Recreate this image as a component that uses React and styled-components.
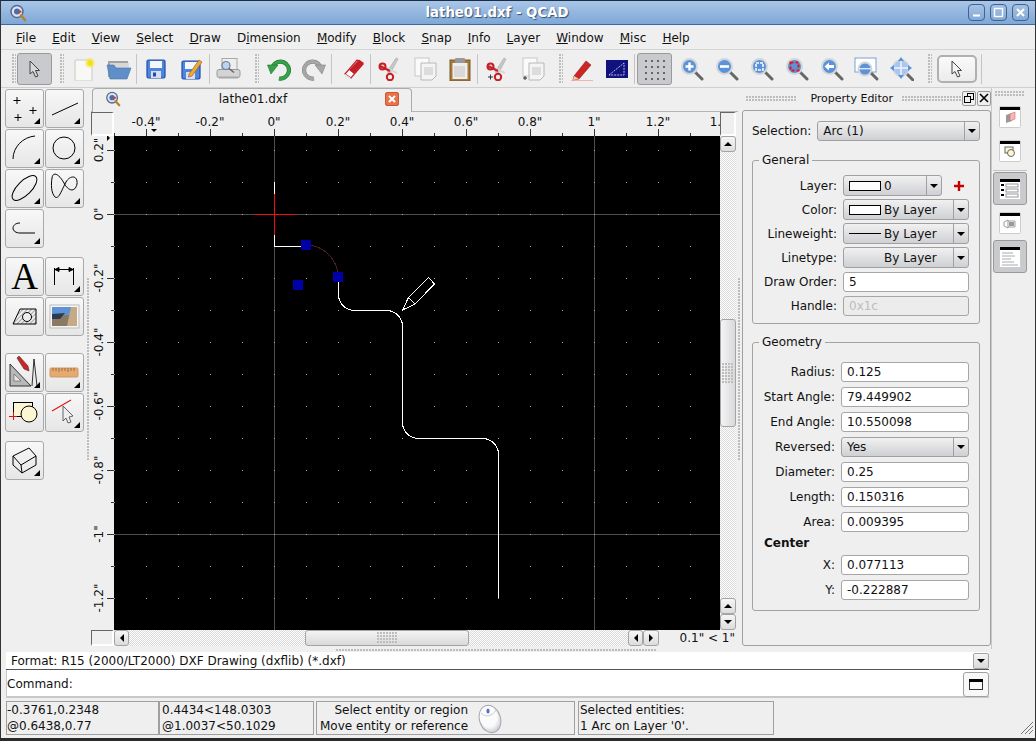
import React from "react";
import styled, { createGlobalStyle, css } from "styled-components";

const GlobalStyle = createGlobalStyle`
    * { box-sizing: border-box; }
    html, body { margin: 0; padding: 0; background: #111; }
    body { font-family: "DejaVu Sans", sans-serif; font-size: 12px; color: #111; }
`;

const dither = css`
    background: repeating-conic-gradient(#fff 0 25%, #d9d9d9 0 50%) 0 0 / 2px 2px;
`;

const dots = css`
    background: radial-gradient(circle at 1px 1px, #bdbdbd 0.8px, transparent 1px) 0 0 / 3px 3px;
`;

const Window = styled.div`
    width: 1036px;
    height: 741px;
    display: flex;
    flex-direction: column;
    background: #efefef;
    border-top: 1px solid #1c2c44;
    border-left: 1px solid #333;
    border-right: 1px solid #333;
    border-bottom: 3px solid #2a2a2a;
    overflow: hidden;
`;

const TitleBar = styled.div`
    height: 24px;
    flex: none;
    position: relative;
    display: flex;
    align-items: center;
    justify-content: center;
    padding-right: 42px;
    background: linear-gradient(#a9c6e8, #7fa7d6);
    border-bottom: 1px solid #3d6a9e;
`;

const TitleText = styled.div`
    font-weight: bold;
    font-size: 13.3px;
    color: #fff;
    text-shadow: 1px 1px 1px #33507a;
`;

const TitleIcon = styled.div`
    position: absolute;
    left: 8px;
    top: 3px;
`;

const WinButtons = styled.div`
    position: absolute;
    right: 6px;
    top: 3px;
    display: flex;
    gap: 5px;
`;

const WinButton = styled.div`
    width: 17px;
    height: 17px;
    border: 1px solid #3f638f;
    border-radius: 4px;
    background: linear-gradient(#a5c2e4, #84a9d6);
    display: flex;
    align-items: center;
    justify-content: center;
`;

const MenuBar = styled.div`
    height: 25px;
    flex: none;
    display: flex;
    align-items: center;
    gap: 16.15px;
    padding: 2px 0 0 15px;
    font-size: 12px;
    border-bottom: 1px solid #d4d4d4;
`;

const Mnemonic = styled.span`
    text-decoration: underline;
`;

const ToolBar = styled.div`
    height: 38px;
    flex: none;
    display: flex;
    align-items: center;
    padding-left: 11px;
    border-bottom: 1px solid #d0d0d0;
`;

const Grip = styled.div`
    width: 4px;
    height: 30px;
    margin: 0 ${(p) => p.$after ?? 2}px 0 ${(p) => p.$before ?? 8}px;
    ${dots}
`;

const Sep = styled.div`
    width: 1px;
    height: 30px;
    background: #c4c4c4;
    margin: 0 ${(p) => p.$right ?? 1}px 0 ${(p) => p.$left ?? 1}px;
`;

const Slot = styled.div`
    width: 35px;
    height: 32px;
    flex: none;
    display: flex;
    align-items: center;
    justify-content: center;
    border-radius: 3px;
    margin-right: ${(p) => p.$gap || 0}px;
    ${(p) => p.$active && css`
        background: #c9cacd;
        border: 1px solid #9a9a9a;
    `}
`;

const WideSlot = styled(Slot)`
    width: 40px;
    height: 28px;
    margin-left: 5px;
    background: linear-gradient(#fafafa, #ececec);
    border: 2px solid #b0b0b0;
    border-radius: 5px;
`;

const Main = styled.div`
    flex: 1;
    display: flex;
    min-height: 0;
`;

const LeftTools = styled.div`
    width: 86px;
    flex: none;
    padding: 1px 0 0 4px;
    display: flex;
    flex-direction: column;
`;

const ToolGroup = styled.div`
    display: grid;
    grid-template-columns: 39px 39px;
    grid-auto-rows: 39px;
    gap: 1px;
    margin-bottom: ${(p) => p.$space}px;
`;

const ToolButton = styled.div`
    position: relative;
    border: 1px solid #a9a9a9;
    border-radius: 3px;
    background: linear-gradient(#f8f8f8, #e6e6e6);
    display: flex;
    align-items: center;
    justify-content: center;
    ${(p) => p.$more && css`
        &::after {
            content: "";
            position: absolute;
            right: 3px;
            bottom: 3px;
            border-style: solid;
            border-width: 0 0 6px 6px;
            border-color: transparent transparent #000 transparent;
        }
    `}
`;

const BigA = styled.span`
    font-family: "Liberation Serif", serif;
    font-size: 37px;
    line-height: 37px;
    color: #000;
`;

const Splitter = styled.div`
    width: 4px;
    flex: none;
    display: flex;
    align-items: center;
`;

const SplitterDots = styled.div`
    width: 3px;
    height: 182px;
    ${dots}
`;

const Center = styled.div`
    width: 647px;
    flex: none;
    display: flex;
    flex-direction: column;
`;

const TabBar = styled.div`
    height: 24px;
    flex: none;
    padding-left: 1px;
    border-bottom: 1px solid #b4b4b4;
`;

const Tab = styled.div`
    width: 320px;
    height: 24px;
    position: relative;
    display: flex;
    align-items: center;
    justify-content: space-between;
    padding: 0 12px 3px 12px;
    background: #efefef;
    border: 1px solid #ababab;
    border-bottom: none;
    border-radius: 4px 4px 0 0;
    font-size: 12px;
`;

const Sub = styled.div`
    display: grid;
    grid-template-columns: 23px 606px 16px;
    grid-template-rows: 24px 494px 16px;
`;

const Corner = styled.div`
    border-top: 1px solid #666;
    border-left: 1px solid #666;
    border-right: 2px solid #fff;
    border-bottom: 2px solid #fff;
`;

const CanvasBox = styled.div`
    background: #000;
    line-height: 0;
`;

const VScroll = styled.div`
    display: flex;
    flex-direction: column;
    width: 16px;
`;

const Track = styled.div`
    flex: 1;
    display: flex;
    flex-direction: ${(p) => (p.$vertical ? "column" : "row")};
    ${dither}
`;

const Thumb = styled.div`
    flex: none;
    display: flex;
    align-items: center;
    justify-content: center;
    background: linear-gradient(${(p) => (p.$vertical ? "90deg," : "")} #f4f4f4, #d9d9dc);
    border: 1px solid #a4a4a4;
    border-radius: 3px;
    ${(p) => (p.$vertical
        ? css`height: 108px; margin-top: 167px;`
        : css`width: 164px; margin-left: 176px;`)}
`;

const ThumbDots = styled.div`
    width: ${(p) => (p.$vertical ? 12 : 20)}px;
    height: ${(p) => (p.$vertical ? 20 : 12)}px;
    ${dots}
`;

const ScrollBtn = styled.div`
    width: ${(p) => (p.$wide ? 16 : 15)}px;
    height: 16px;
    flex: none;
    display: flex;
    align-items: center;
    justify-content: center;
    background: linear-gradient(#f6f6f6, #dcdcdf);
    border: 1px solid #a4a4a4;
    border-radius: 3px;
`;

const Arrow = styled.span`
    width: 0;
    height: 0;
    border-style: solid;
    ${(p) => p.$dir === "up" && css`border-width: 0 4px 4px 4px; border-color: transparent transparent #000 transparent;`}
    ${(p) => p.$dir === "down" && css`border-width: 4px 4px 0 4px; border-color: #000 transparent transparent transparent;`}
    ${(p) => p.$dir === "left" && css`border-width: 4px 4px 4px 0; border-color: transparent #000 transparent transparent;`}
    ${(p) => p.$dir === "right" && css`border-width: 4px 0 4px 4px; border-color: transparent transparent transparent #000;`}
`;

const BottomBar = styled.div`
    grid-column: 2 / 4;
    display: flex;
    align-items: center;
`;

const HScroll = styled.div`
    width: 545px;
    height: 16px;
    display: flex;
`;

const ScaleLabel = styled.div`
    flex: 1;
    text-align: right;
    padding-right: 1px;
    font-size: 12px;
    white-space: nowrap;
`;

const Dock = styled.div`
    width: 249px;
    flex: none;
    display: flex;
    flex-direction: column;
`;

const DockTitle = styled.div`
    height: 22px;
    flex: none;
    display: flex;
    align-items: center;
    padding: 0 0 2px 4px;
    font-size: 11px;
`;

const TitleGrip = styled.div`
    height: 5px;
    width: ${(p) => p.$w}px;
    ${dots}
`;

const DockLabel = styled.div`
    margin: 0 9px 0 13px;
    white-space: nowrap;
`;

const DockBtn = styled.div`
    width: 14px;
    height: 15px;
    margin-left: 1px;
    border: 1px solid #999;
    border-radius: 2px;
    display: flex;
    align-items: center;
    justify-content: center;
`;

const Panel = styled.div`
    height: 536px;
    border: 1px solid #a0a0a0;
    border-radius: 3px;
    padding: 10px 10px 0 9px;
`;

const SelectionRow = styled.div`
    display: flex;
    align-items: center;
    gap: 6px;
    margin-bottom: 12px;
`;

const FieldGroup = styled.fieldset`
    margin: 0 0 11px 0;
    padding: 0 10px 0 0;
    border: 1px solid #a3a3a3;
    border-radius: 3px;
    min-width: 0;
`;

const GroupTitle = styled.legend`
    margin-left: 6px;
    padding: 0 3px;
    font-size: 12px;
    line-height: 14px;
`;

const FormRows = styled.div`
    display: grid;
    grid-template-columns: ${(p) => p.$label}px 1fr;
    grid-auto-rows: ${(p) => p.$row}px;
    column-gap: 6px;
    row-gap: ${(p) => p.$gap}px;
    align-items: center;
    padding: ${(p) => p.$top}px 0 ${(p) => p.$bottom}px 0;
`;

const Label = styled.div`
    text-align: right;
    font-size: 12px;
    white-space: nowrap;
`;

const Bold = styled.div`
    font-weight: bold;
    font-size: 12px;
    line-height: 14px;
    padding: 4px 0 5px 11px;
`;

const Input = styled.div`
    height: ${(p) => p.$h || 20}px;
    display: flex;
    align-items: center;
    padding-left: 5px;
    font-size: 12px;
    background: ${(p) => (p.$disabled ? "#ececec" : "#fff")};
    color: ${(p) => (p.$disabled ? "#bdbdbd" : "#111")};
    border: 1px solid #a6a6a6;
    border-radius: 3px;
`;

const ComboBox = styled.div`
    height: ${(p) => p.$h || 21}px;
    width: ${(p) => (p.$w ? `${p.$w}px` : "auto")};
    flex: ${(p) => (p.$w ? "none" : 1)};
    display: flex;
    font-size: 12px;
    background: linear-gradient(#f1f1f1, #cfd0d4);
    border: 1px solid #a0a0a0;
    border-radius: 3px;
`;

const ComboValue = styled.div`
    flex: 1;
    display: flex;
    align-items: center;
    gap: 3px;
    padding-left: 5px;
    white-space: nowrap;
`;

const ComboArrow = styled.div`
    width: 15px;
    flex: none;
    display: flex;
    align-items: center;
    justify-content: center;
    border-left: 1px solid #a0a0a0;
`;

const Swatch = styled.span`
    width: 32px;
    height: 10px;
    flex: none;
    background: #fff;
    border: 1px solid #000;
`;

const LineSwatch = styled.span`
    width: 32px;
    height: 1px;
    flex: none;
    background: #000;
`;

const EmptySwatch = styled.span`
    width: 32px;
    flex: none;
`;

const LayerRow = styled.div`
    display: flex;
    align-items: center;
`;

const PlusMark = styled.div`
    margin-left: 12px;
    line-height: 0;
`;

const SideBar = styled.div`
    flex: 1;
    border-left: 1px solid #c8c8c8;
    display: flex;
    flex-direction: column;
    align-items: center;
    padding-right: 7px;
    padding-top: 3px;
`;

const SideGrip = styled.div`
    width: 30px;
    height: 5px;
    margin-bottom: 4px;
    ${dots}
`;

const SideBtn = styled.div`
    width: 34px;
    height: 33px;
    flex: none;
    margin-bottom: ${(p) => p.$space || 0}px;
    display: flex;
    align-items: center;
    justify-content: center;
    border-radius: 3px;
    ${(p) => p.$active && css`
        background: #c9cacd;
        border: 1px solid #9a9a9a;
    `}
`;

const SideRule = styled.div`
    width: 34px;
    height: 1px;
    background: #c4c4c4;
    margin: 2px 0 1px 0;
`;

const HSplit = styled.div`
    height: 3px;
    width: 320px;
    margin-left: 335px;
    flex: none;
    ${dots}
`;

const FormatRow = styled.div`
    height: 18px;
    flex: none;
    margin: 0 46px 0 5px;
    display: flex;
    align-items: center;
    justify-content: space-between;
    background: #fff;
    border-bottom: 1px solid #555;
    padding: 1px 0 0 5px;
    font-size: 12px;
`;

const FormatArrow = styled.div`
    width: 16px;
    height: 16px;
    display: flex;
    align-items: center;
    justify-content: center;
    background: linear-gradient(#f6f6f6, #d8d8dc);
    border: 1px solid #a4a4a4;
    border-radius: 2px;
`;

const CommandRow = styled.div`
    height: 28px;
    flex: none;
    margin: 0 46px 0 5px;
    padding-top: 2px;
    display: flex;
    align-items: center;
    justify-content: space-between;
    background: #fff;
    border-left: 1px solid #c8c8c8;
    border-bottom: 2px solid #c8c8c8;
    font-size: 12px;
`;

const CommandBtn = styled.div`
    width: 26px;
    height: 25px;
    display: flex;
    align-items: center;
    justify-content: center;
    background: #f8f8f8;
    border: 1px solid #a0a0a0;
    border-radius: 3px;
`;

const StatusBar = styled.div`
    height: 34px;
    flex: none;
    position: relative;
    display: flex;
    margin: 3px 0 3px 5px;
    font-size: 12px;
`;

const StatusCell = styled.div`
    width: ${(p) => p.$w}px;
    margin-right: ${(p) => p.$gap || 0}px;
    flex: none;
    border: 1px solid #a0a0a0;
    padding: 0 0 0 ${(p) => p.$pad || 0}px;
    line-height: 16px;
    display: flex;
    flex-direction: column;
    justify-content: center;
    white-space: nowrap;
`;

const HintCell = styled(StatusCell)`
    flex-direction: row;
    justify-content: flex-start;
    align-items: center;
`;

const HintText = styled.div`
    text-align: right;
    width: 148px;
`;

const MouseIcon = styled.div`
    margin-left: 8px;
    line-height: 0;
`;

const SizeGrip = styled.div`
    position: absolute;
    right: 1px;
    bottom: 0;
    line-height: 0;
`;

// toolbar icons

const Ico = ({ size = 24, vb = "0 0 24 24", children }) => (
    <svg width={size} height={size} viewBox={vb} fill="none">{children}</svg>
);

const Cursor = ({ fill = "#d8d8d8" }) => (
    <Ico size={20} vb="0 0 20 20">
        <path d="M5 2 L5 15 L8 12.5 L10.5 18 L13 17 L10.5 11.5 L14.5 11.5 Z" fill={fill} stroke="#444" strokeWidth="1" />
    </Ico>
);

const QIcon = ({ size = 18 }) => (
    <Ico size={size} vb="0 0 18 18">
        <circle cx="8" cy="7.5" r="6" fill="#dfe4ee" stroke="#5b6b8c" strokeWidth="1.5" />
        <circle cx="8" cy="7.5" r="3" fill="#4d6cab" />
        <path d="M11 6 L13 8 L9 10 Z" fill="#c9432f" />
        <path d="M12 11.5 L16 16" stroke="#b5852e" strokeWidth="2.6" strokeLinecap="round" />
    </Ico>
);

const NewIcon = () => (
    <Ico>
        <rect x="3" y="3" width="17" height="21" rx="1" fill="#f8f8f4" stroke="#c8c8c8" />
        <circle cx="18" cy="6" r="5" fill="#f5ea4a" opacity="0.55" />
        <circle cx="18" cy="6" r="3" fill="#f2e21c" />
    </Ico>
);

const OpenIcon = () => (
    <Ico size={26} vb="0 0 26 24">
        <path d="M2 4 H22 V20 H2 Z" fill="#a0a3a6" />
        <path d="M4 6 H23 V12 H4 Z" fill="#d8d8d8" />
        <path d="M1 8 H8 L10 11 H25 L21 22 H4 Z" fill="#5f8ec8" stroke="#4a74a8" strokeWidth="0.6" />
    </Ico>
);

const SaveIcon = () => (
    <Ico>
        <rect x="3" y="3" width="18" height="18" rx="1.5" fill="#4f86dc" stroke="#1d4cae" strokeWidth="1.2" />
        <rect x="6" y="4" width="12" height="7" fill="#f4f6fa" />
        <rect x="7" y="14" width="10" height="7" fill="#d6def0" />
        <rect x="9" y="15.5" width="3" height="4" fill="#1d4cae" />
    </Ico>
);

const SaveAsIcon = () => (
    <Ico>
        <rect x="3" y="4" width="18" height="18" rx="1.5" fill="#4f86dc" stroke="#1d4cae" strokeWidth="1.2" />
        <rect x="6" y="5" width="12" height="7" fill="#f4f6fa" />
        <rect x="7" y="15" width="9" height="7" fill="#d6def0" />
        <path d="M10 17 L20 3 L23 5 L13 19 L9.5 20 Z" fill="#f0a83a" stroke="#9c6a1a" strokeWidth="0.7" />
    </Ico>
);

const PrintIcon = () => (
    <Ico size={25} vb="0 0 25 24">
        <rect x="6" y="2" width="15" height="14" fill="#eee" stroke="#a8a8a8" />
        <rect x="1" y="13" width="23" height="8" rx="2" fill="#d4d4d4" stroke="#999" />
        <rect x="3" y="20" width="19" height="2" fill="#a8a8a8" />
        <circle cx="10" cy="9" r="4" fill="#bcd2ee" stroke="#6f7f96" strokeWidth="1.2" />
        <path d="M13 12 L18 16" stroke="#666" strokeWidth="1.6" />
    </Ico>
);

const UndoIcon = ({ flip, color = "#36a04a", edge = "#1e7a30" }) => (
    <Ico>
        <g transform={flip ? "matrix(-1 0 0 1 24 0)" : undefined}>
            <path d="M6 9 A8.5 8.5 0 1 1 12 21.5" stroke={edge} strokeWidth="4.2" />
            <path d="M6 9 A8.5 8.5 0 1 1 12 21.5" stroke={color} strokeWidth="3" />
            <path d="M0.5 8 L11 8 L4 17 Z" fill={color} stroke={edge} strokeWidth="0.6" />
        </g>
    </Ico>
);

const EraserIcon = () => (
    <Ico>
        <path d="M4 17 L16 3 L22 7 L10 21 Z" fill="#fff" stroke="#c41f26" strokeWidth="1.2" />
        <path d="M8 13 L18 2.5 L23 6 L13 17 Z" fill="#c41f26" />
        <path d="M4 17 L10 21 L4 22 Z" fill="#e8e8e8" />
    </Ico>
);

const ScissorsIcon = ({ plus }) => (
    <Ico>
        <path d="M9 15 L18 1 L20 2 L12 17 Z" fill="#c8c8c8" stroke="#999" strokeWidth="0.5" />
        <path d="M2 8 L19 16" stroke="#d8d8d8" strokeWidth="2" />
        <path d="M2 9 L12 14" stroke="#c81e24" strokeWidth="2" />
        <circle cx="4.5" cy="9.5" r="3" stroke="#c81e24" strokeWidth="2" />
        <circle cx="12" cy="20" r="3.2" stroke="#c81e24" strokeWidth="2" />
        {plus && <path d="M2 20 H7 M4.5 17.5 V22.5" stroke="#333" strokeWidth="1" />}
    </Ico>
);

const CopyIcon = ({ plus }) => (
    <Ico>
        <rect x="2" y="1" width="14" height="18" fill="#fafafa" stroke="#c8c8c8" />
        <path d="M8 6 H23 V19 L19 23 H8 Z" fill="#f4f4f4" stroke="#b8b8b8" />
        <rect x="11" y="10" width="9" height="8" fill="#dcdcdc" />
        {plus && <path d="M2 21 H6 M4 19 V23" stroke="#333" strokeWidth="1" />}
    </Ico>
);

const PasteIcon = () => (
    <Ico>
        <rect x="2" y="3" width="20" height="21" fill="#a67a3a" stroke="#7c5826" />
        <rect x="4.5" y="6" width="15" height="16" fill="#eee" />
        <rect x="7" y="1" width="10" height="5" rx="1" fill="#999" />
        <rect x="6" y="9" width="11" height="11" fill="#d8d8d8" />
    </Ico>
);

const PencilIcon = () => (
    <Ico>
        <path d="M4 19 L16 4 L21 8 L9 22 L3 23 Z" fill="#cf2424" stroke="#8e1616" strokeWidth="0.6" />
        <path d="M3 23 L4 19 L9 22 Z" fill="#eed4b0" />
        <path d="M1 24 H23" stroke="#ef8e8e" strokeWidth="1.2" />
    </Ico>
);

const TriangleIcon = () => (
    <Ico>
        <rect x="1" y="3" width="22" height="18" fill="#12127e" />
        <path d="M4 18 L19 6 V18 Z" stroke="#dfe4ff" strokeWidth="0.8" strokeDasharray="2 1" />
    </Ico>
);

const GridIcon = () => (
    <Ico>
        {[3, 9, 15, 21].map((y) => [2, 8, 14, 20].map((x) => (
            <rect key={`${x}-${y}`} x={x} y={y} width="2" height="2" fill="#666" />
        )))}
    </Ico>
);

const ZoomGlass = ({ children }) => (
    <Ico>
        <path d="M14 14 L22 22" stroke="#666" strokeWidth="3" strokeLinecap="round" />
        <circle cx="9.5" cy="9.5" r="8.5" fill="#d2d6dc" />
        <circle cx="9.5" cy="9.5" r="6.5" fill="#5c92d8" />
        {children}
    </Ico>
);

const ZoomIn = () => <ZoomGlass><path d="M5.5 9.5 H13.5 M9.5 5.5 V13.5" stroke="#fff" strokeWidth="2.4" /></ZoomGlass>;
const ZoomOut = () => <ZoomGlass><path d="M5 9.5 H14" stroke="#fff" strokeWidth="2.6" /></ZoomGlass>;
const ZoomAuto = () => <ZoomGlass><rect x="6" y="6" width="7" height="7" stroke="#fff" strokeWidth="1.5" strokeDasharray="3 1" /></ZoomGlass>;
const ZoomSel = () => <ZoomGlass><rect x="5.5" y="5.5" width="8" height="8" stroke="#e01818" strokeWidth="2" strokeDasharray="3 2" /></ZoomGlass>;
const ZoomPrev = () => <ZoomGlass><path d="M4.5 9.5 L9 5.5 V8 H14 V11 H9 V13.5 Z" fill="#fff" /></ZoomGlass>;

const ZoomWindow = () => (
    <Ico size={26} vb="0 0 26 24">
        <rect x="1" y="1" width="21" height="14" fill="#fff" stroke="#7da2d4" />
        <path d="M16 15 L23 22" stroke="#666" strokeWidth="3" strokeLinecap="round" />
        <circle cx="11" cy="12" r="7.5" fill="#d2d6dc" />
        <circle cx="11" cy="12" r="5.5" fill="#5c92d8" />
        <rect x="5" y="11" width="12" height="1.4" fill="#dfe8f5" />
    </Ico>
);

const ZoomPan = () => (
    <Ico>
        <path d="M16 16 L23 23" stroke="#666" strokeWidth="3" strokeLinecap="round" />
        <circle cx="11" cy="11" r="8" fill="#a8c6ee" stroke="#d2d6dc" strokeWidth="1.5" />
        <path d="M11 0 L14 4 H8 Z M11 22 L14 18 H8 Z M0 11 L4 8 V14 Z M22 11 L18 8 V14 Z" fill="#5c92d8" />
        <path d="M4 11 H18 M11 4 V18" stroke="#eef4fc" strokeWidth="1.5" />
    </Ico>
);

// left tool icons

const Tool = ({ children }) => (
    <svg width="37" height="37" viewBox="1 1 37 37" fill="none" stroke="#000" strokeWidth="1">{children}</svg>
);

const PointsIcon = () => (
    <Tool><path d="M8.5 11.5 H15.5 M12 8 V15 M24.5 21.5 H31.5 M28 18 V25 M9.5 28.5 H16.5 M13 25 V32" /></Tool>
);
const LineIcon = () => <Tool><path d="M7 26 L33 14" /></Tool>;
const ArcIcon = () => <Tool><path d="M8 30 C8 18 18 8 30 7" /></Tool>;
const CircleIcon = () => <Tool><circle cx="19" cy="19" r="11" /></Tool>;
const EllipseIcon = () => <Tool><ellipse cx="19.5" cy="19" rx="16" ry="7" transform="rotate(-45 19.5 19)" /></Tool>;
const SplineIcon = () => (
    <Tool><path d="M7 9 C8 2 14 5 19 14 C23 22 30 24 32 15 C33 6 25 6 21 13 C17 20 14 31 10 28 C6 24 6 15 7 9 Z" /></Tool>
);
const PolyIcon = () => <Tool><path d="M15 14 C10 14 8 17 8 19 C8 22 11 24 15 24 L30 24" /></Tool>;
const DimIcon = () => (
    <Tool>
        <path d="M9.5 11 V28 M28.5 11 V28 M9.5 12.5 H28.5" />
        <path d="M10 12.5 L14 10.5 V14.5 Z M28 12.5 L24 10.5 V14.5 Z" fill="#000" />
    </Tool>
);
const HatchIcon = () => (
    <Tool>
        <defs>
            <pattern id="hatch" width="3" height="3" patternUnits="userSpaceOnUse" patternTransform="rotate(-45)">
                <path d="M0 0 H3" stroke="#333" strokeWidth="0.8" />
            </pattern>
        </defs>
        <path d="M8 27 L15 12 H31 V27 Z" fill="url(#hatch)" />
        <circle cx="22" cy="20" r="4.5" fill="#eee" />
    </Tool>
);
const ImageIcon = () => (
    <svg width="37" height="37" viewBox="1 1 37 37">
        <rect x="5" y="8" width="29" height="23" fill="#f6f6f6" stroke="#bbb" />
        <rect x="7" y="10" width="25" height="19" fill="#8a7a64" />
        <rect x="7" y="10" width="25" height="8" fill="#5d93d4" />
        <path d="M7 17 L20 16 L15 22 H7 Z" fill="#2d3a52" />
        <path d="M22 29 L26 10 H32 V29 Z" fill="#c6a986" />
    </svg>
);
const DraftIcon = () => (
    <Tool>
        <path d="M5 11 L26 33 H5 Z" fill="#b8b8b8" stroke="#333" />
        <path d="M9 21 L16 28 H9 Z" fill="#e8e8e8" stroke="#555" strokeWidth="0.6" />
        <path d="M12 5 L14 3 L23 13 L24 18 L19 16 Z" fill="#cf2424" stroke="#333" strokeWidth="0.6" />
        <path d="M29 6 L27 33 M29 6 L32 33" strokeWidth="0.8" />
    </Tool>
);
const RulerIcon = () => (
    <svg width="37" height="37" viewBox="1 1 37 37">
        <rect x="5" y="15" width="28" height="9" rx="1" fill="#e6a970" stroke="#cd9a6b" />
        <path d="M8 15 V18 M11 15 V18 M14 15 V19 M17 15 V18 M20 15 V18 M23 15 V19 M26 15 V18 M29 15 V18" stroke="#8c6236" strokeWidth="0.8" />
    </svg>
);
const BlockIcon = () => (
    <svg width="37" height="37" viewBox="1 1 37 37" fill="none">
        <rect x="8.5" y="9.5" width="19" height="14" fill="#fdf6d2" stroke="#000" />
        <circle cx="24" cy="21" r="8" fill="#fdf6d2" stroke="#000" />
        <path d="M4 23.5 H12 M8.5 19 V27" stroke="#e01010" strokeWidth="1" />
    </svg>
);
const SelectLineIcon = () => (
    <svg width="37" height="37" viewBox="1 1 37 37" fill="none">
        <path d="M7 18 L26 7" stroke="#e01818" strokeWidth="1.2" />
        <path d="M18 13 L18 28 L21 25 L23 30 L26 29 L24 24 L28 23 Z" fill="#eee" stroke="#555" strokeWidth="0.9" />
    </svg>
);
const CubeIcon = () => (
    <Tool><path d="M8 15 L24 7 L31 15 L16 24 Z M8 15 V24 L17 32 L31 24 V15 M16 24 L17 32" /></Tool>
);

// side bar icons

const MiniWin = ({ children }) => (
    <svg width="22" height="22" viewBox="0 0 22 22" fill="none">
        <rect x="0.5" y="0.5" width="21" height="21" rx="1" fill="#fff" stroke="#ccc" />
        <rect x="1" y="1" width="20" height="3" fill="#000" />
        {children}
    </svg>
);

// drawing

const xs = Array.from({ length: 19 }, (_, i) => i);
const ys = Array.from({ length: 16 }, (_, i) => i);

const topLabels = ['-0.4"', '-0.2"', '0"', '0.2"', '0.4"', '0.6"', '0.8"', '1"', '1.2"', '1.4"'];
const sideLabels = ['0.2"', '0"', '-0.2"', '-0.4"', '-0.6"', '-0.8"', '-1"', '-1.2"'];

const TopRuler = () => (
    <svg width="606" height="24" viewBox="114 112 606 24">
        {xs.map((i) => {
            const x = 114 + i * 32 + 0.5;
            const major = i % 2 === 1 ? 129 : 133;
            return <path key={i} d={`M${x} ${major} V136`} stroke="#333" />;
        })}
        {topLabels.map((t, i) => (
            <text key={t} x={146 + i * 64} y="126" textAnchor="middle" fontSize="12" fontFamily="DejaVu Sans" fill="#111">{t}</text>
        ))}
        <path d="M151 129 H157 L154 132 Z" fill="#000" />
    </svg>
);

const SideRuler = () => (
    <svg width="23" height="494" viewBox="91 136 23 494">
        {ys.map((i) => {
            const y = 150 + i * 32 + 0.5;
            const major = i % 2 === 0 ? 107 : 111;
            return <path key={i} d={`M${major} ${y} H114`} stroke="#333" />;
        })}
        {sideLabels.map((t, i) => (
            <text key={t} transform={`translate(103 ${150 + i * 64}) rotate(-90)`} textAnchor="middle" fontSize="12" fontFamily="DejaVu Sans" fill="#111">{t}</text>
        ))}
        <path d="M107 135 V141 L110 138 Z" fill="#000" />
    </svg>
);

const Drawing = () => (
    <svg width="606" height="494" viewBox="114 136 606 494" fill="none">
        <g shapeRendering="crispEdges">
            <path d="M114 214.5 H720 M114 534.5 H720 M274.5 136 V630 M594.5 136 V630" stroke="#4c4c4c" />
            {xs.map((i) => ys.map((j) => (
                <rect key={`${i}-${j}`} x={114 + i * 32} y={150 + j * 32} width="1" height="1" fill="#a8a8a8" />
            )))}
            <path d="M274.5 182 V246.5 H306" stroke="#fff" />
            <path d="M306 245 A32 32 0 0 1 338 277" stroke="#4a2020" />
            <path d="M338.5 282 V294 A16 16 0 0 0 354.5 310.5 H386 A16 16 0 0 1 402.5 326 V422 A16 16 0 0 0 418.5 438.5 H482 A16 16 0 0 1 498.5 454 V598" stroke="#fff" />
            <path d="M254 214.5 H295 M274.5 194 V235" stroke="#f01010" />
            <path d="M402.5 310 L408.5 297.5 L428.5 277.5 L434.5 284 L415 304 Z M408.5 297.5 L415 304" stroke="#fff" />
        </g>
        <g fill="#0000a8">
            <rect x="301" y="240" width="10" height="10" />
            <rect x="333" y="272" width="10" height="10" />
            <rect x="293" y="280" width="10" height="10" />
        </g>
    </svg>
);

const Menu = ({ u, rest, pre = "" }) => (
    <span>{pre}<Mnemonic>{u}</Mnemonic>{rest}</span>
);

const Combo = ({ children, w, h }) => (
    <ComboBox $w={w} $h={h}>
        <ComboValue>{children}</ComboValue>
        <ComboArrow><Arrow $dir="down" /></ComboArrow>
    </ComboBox>
);

export default function App() {
    return (
        <Window>
            <GlobalStyle />
            <TitleBar>
                <TitleIcon><QIcon /></TitleIcon>
                <TitleText>lathe01.dxf - QCAD</TitleText>
                <WinButtons>
                    <WinButton>
                        <svg width="11" height="11"><path d="M2 8.5 H9" stroke="#fff" strokeWidth="2" /></svg>
                    </WinButton>
                    <WinButton>
                        <svg width="11" height="11"><rect x="1.5" y="1.5" width="8" height="8" stroke="#fff" strokeWidth="1.4" fill="none" /></svg>
                    </WinButton>
                    <WinButton>
                        <svg width="11" height="11"><path d="M2 2 L9 9 M9 2 L2 9" stroke="#fff" strokeWidth="2" /></svg>
                    </WinButton>
                </WinButtons>
            </TitleBar>

            <MenuBar>
                <Menu u="F" rest="ile" />
                <Menu u="E" rest="dit" />
                <Menu u="V" rest="iew" />
                <Menu u="S" rest="elect" />
                <Menu u="D" rest="raw" />
                <Menu pre="D" u="i" rest="mension" />
                <Menu u="M" rest="odify" />
                <Menu u="B" rest="lock" />
                <Menu u="S" rest="nap" />
                <Menu u="I" rest="nfo" />
                <Menu u="L" rest="ayer" />
                <Menu u="W" rest="indow" />
                <Menu u="M" rest="isc" />
                <Menu u="H" rest="elp" />
            </MenuBar>

            <ToolBar>
                <Grip $before={0} $after={1} />
                <Slot $active><Cursor /></Slot>
                <Grip />
                <Slot><NewIcon /></Slot>
                <Slot><OpenIcon /></Slot>
                <Sep $left={0} />
                <Slot><SaveIcon /></Slot>
                <Slot><SaveAsIcon /></Slot>
                <Sep />
                <Slot><PrintIcon /></Slot>
                <Grip $before={9} />
                <Slot><UndoIcon /></Slot>
                <Slot><UndoIcon flip color="#a6a8a6" edge="#868886" /></Slot>
                <Sep $left={0} $right={3} />
                <Slot><EraserIcon /></Slot>
                <Sep $left={0} />
                <Slot><ScissorsIcon /></Slot>
                <Slot><CopyIcon /></Slot>
                <Slot><PasteIcon /></Slot>
                <Sep $left={0} $right={2} />
                <Slot><ScissorsIcon plus /></Slot>
                <Slot><CopyIcon plus /></Slot>
                <Grip $before={9} $after={1} />
                <Slot><PencilIcon /></Slot>
                <Slot><TriangleIcon /></Slot>
                <Sep $left={0} $right={2} />
                <Slot $active $gap={2}><GridIcon /></Slot>
                <Slot><ZoomIn /></Slot>
                <Slot><ZoomOut /></Slot>
                <Slot><ZoomAuto /></Slot>
                <Slot><ZoomSel /></Slot>
                <Slot><ZoomPrev /></Slot>
                <Slot><ZoomWindow /></Slot>
                <Slot><ZoomPan /></Slot>
                <Grip $before={9} $after={0} />
                <WideSlot><Cursor fill="#f4f4f4" /></WideSlot>
                <Sep $left={4} />
            </ToolBar>

            <Main>
                <LeftTools>
                    <ToolGroup $space={9}>
                        <ToolButton $more><PointsIcon /></ToolButton>
                        <ToolButton $more><LineIcon /></ToolButton>
                        <ToolButton $more><ArcIcon /></ToolButton>
                        <ToolButton $more><CircleIcon /></ToolButton>
                        <ToolButton $more><EllipseIcon /></ToolButton>
                        <ToolButton $more><SplineIcon /></ToolButton>
                        <ToolButton $more><PolyIcon /></ToolButton>
                    </ToolGroup>
                    <ToolGroup $space={17}>
                        <ToolButton><BigA>A</BigA></ToolButton>
                        <ToolButton $more><DimIcon /></ToolButton>
                        <ToolButton><HatchIcon /></ToolButton>
                        <ToolButton><ImageIcon /></ToolButton>
                    </ToolGroup>
                    <ToolGroup $space={9}>
                        <ToolButton $more><DraftIcon /></ToolButton>
                        <ToolButton $more><RulerIcon /></ToolButton>
                        <ToolButton><BlockIcon /></ToolButton>
                        <ToolButton $more><SelectLineIcon /></ToolButton>
                    </ToolGroup>
                    <ToolGroup $space={0}>
                        <ToolButton $more><CubeIcon /></ToolButton>
                    </ToolGroup>
                </LeftTools>
                <Splitter><SplitterDots /></Splitter>

                <Center>
                    <TabBar>
                        <Tab>
                            <QIcon size={16} />
                            <span>lathe01.dxf</span>
                            <svg width="14" height="14">
                                <rect x="0.5" y="0.5" width="13" height="13" rx="1.5" fill="#e8734a" stroke="#c95a34" />
                                <path d="M4 4 L10 10 M10 4 L4 10" stroke="#fff" strokeWidth="2" />
                            </svg>
                        </Tab>
                    </TabBar>
                    <Sub>
                        <Corner />
                        <TopRuler />
                        <Corner />
                        <SideRuler />
                        <CanvasBox><Drawing /></CanvasBox>
                        <VScroll>
                            <ScrollBtn $wide><Arrow $dir="up" /></ScrollBtn>
                            <Track $vertical>
                                <Thumb $vertical><ThumbDots $vertical /></Thumb>
                            </Track>
                            <ScrollBtn $wide><Arrow $dir="up" /></ScrollBtn>
                            <ScrollBtn $wide><Arrow $dir="down" /></ScrollBtn>
                        </VScroll>
                        <Corner />
                        <BottomBar>
                            <HScroll>
                                <ScrollBtn><Arrow $dir="left" /></ScrollBtn>
                                <Track>
                                    <Thumb><ThumbDots /></Thumb>
                                </Track>
                                <ScrollBtn><Arrow $dir="left" /></ScrollBtn>
                                <ScrollBtn $wide><Arrow $dir="right" /></ScrollBtn>
                            </HScroll>
                            <ScaleLabel>0.1" &lt; 1"</ScaleLabel>
                        </BottomBar>
                    </Sub>
                </Center>
                <Splitter><SplitterDots /></Splitter>

                <Dock>
                    <DockTitle>
                        <TitleGrip $w={52} />
                        <DockLabel>Property Editor</DockLabel>
                        <TitleGrip $w={60} />
                        <DockBtn>
                            <svg width="10" height="10" fill="none" stroke="#000"><rect x="3.5" y="0.5" width="6" height="6" /><rect x="0.5" y="3.5" width="6" height="6" fill="#efefef" /></svg>
                        </DockBtn>
                        <DockBtn>
                            <svg width="10" height="10"><path d="M1 1 L9 9 M9 1 L1 9" stroke="#000" strokeWidth="1.6" /></svg>
                        </DockBtn>
                    </DockTitle>
                    <Panel>
                        <SelectionRow>
                            <Label>Selection:</Label>
                            <Combo h={20}>Arc (1)</Combo>
                        </SelectionRow>

                        <FieldGroup>
                            <GroupTitle>General</GroupTitle>
                            <FormRows $label={84} $row={21} $gap={3} $top={8} $bottom={7}>
                                <Label>Layer:</Label>
                                <LayerRow>
                                    <Combo w={99}><Swatch />0</Combo>
                                    <PlusMark>
                                        <svg width="10" height="10"><path d="M5 0 V10 M0 5 H10" stroke="#c40000" strokeWidth="2.4" /></svg>
                                    </PlusMark>
                                </LayerRow>
                                <Label>Color:</Label>
                                <Combo><Swatch />By Layer</Combo>
                                <Label>Lineweight:</Label>
                                <Combo><LineSwatch />By Layer</Combo>
                                <Label>Linetype:</Label>
                                <Combo><EmptySwatch />By Layer</Combo>
                                <Label>Draw Order:</Label>
                                <Input>5</Input>
                                <Label>Handle:</Label>
                                <Input $disabled>0x1c</Input>
                            </FormRows>
                        </FieldGroup>

                        <FieldGroup>
                            <GroupTitle>Geometry</GroupTitle>
                            <FormRows $label={82} $row={20} $gap={5} $top={13} $bottom={0}>
                                <Label>Radius:</Label>
                                <Input>0.125</Input>
                                <Label>Start Angle:</Label>
                                <Input>79.449902</Input>
                                <Label>End Angle:</Label>
                                <Input>10.550098</Input>
                                <Label>Reversed:</Label>
                                <Combo h={20}>Yes</Combo>
                                <Label>Diameter:</Label>
                                <Input>0.25</Input>
                                <Label>Length:</Label>
                                <Input>0.150316</Input>
                                <Label>Area:</Label>
                                <Input>0.009395</Input>
                            </FormRows>
                            <Bold>Center</Bold>
                            <FormRows $label={82} $row={20} $gap={5} $top={0} $bottom={10}>
                                <Label>X:</Label>
                                <Input>0.077113</Input>
                                <Label>Y:</Label>
                                <Input>-0.222887</Input>
                            </FormRows>
                        </FieldGroup>
                    </Panel>
                </Dock>

                <SideBar>
                    <SideGrip />
                    <SideBtn $space={1}>
                        <MiniWin>
                            <path d="M7 9 L13 7 V15 L7 17 Z" fill="#999" />
                            <path d="M11 8 L16 6 V13 L11 15 Z" fill="#f3b8b8" stroke="#d66" strokeWidth="0.6" />
                        </MiniWin>
                    </SideBtn>
                    <SideBtn $space={1}>
                        <MiniWin>
                            <rect x="6" y="7" width="8" height="6" fill="#fdf6d2" stroke="#666" />
                            <circle cx="12" cy="13" r="3.5" fill="#fdf6d2" stroke="#666" />
                        </MiniWin>
                    </SideBtn>
                    <SideRule />
                    <SideBtn $active $space={1}>
                        <MiniWin>
                            <path d="M2 7 H5 M2 12 H5 M2 17 H5" stroke="#000" strokeWidth="2" />
                            <rect x="7" y="6" width="12" height="3" stroke="#999" />
                            <rect x="7" y="11" width="12" height="3" stroke="#999" />
                            <rect x="7" y="16" width="12" height="3" stroke="#999" />
                        </MiniWin>
                    </SideBtn>
                    <SideBtn $space={1}>
                        <MiniWin>
                            <path d="M5 10 L9 8 V16 L5 14 Z M9 9 H16 V15 H9" stroke="#888" strokeWidth="0.8" />
                            <rect x="10" y="10" width="5" height="4" fill="#999" />
                        </MiniWin>
                    </SideBtn>
                    <SideBtn $active>
                        <MiniWin>
                            <path d="M3 7 H14 M3 10 H16 M3 13 H12 M3 16 H15 M3 19 H19" stroke="#aaa" strokeWidth="1" />
                        </MiniWin>
                    </SideBtn>
                </SideBar>
            </Main>

            <HSplit />
            <FormatRow>
                <span>Format: R15 (2000/LT2000) DXF Drawing (dxflib) (*.dxf)</span>
                <FormatArrow><Arrow $dir="down" /></FormatArrow>
            </FormatRow>
            <CommandRow>
                <span>Command:</span>
                <CommandBtn>
                    <svg width="14" height="11" fill="none">
                        <rect x="0.5" y="0.5" width="13" height="10" stroke="#333" />
                        <rect x="0" y="0" width="14" height="3" fill="#000" />
                    </svg>
                </CommandBtn>
            </CommandRow>
            <StatusBar>
                <StatusCell $w={153}>
                    <div>-0.3761,0.2348</div>
                    <div>@0.6438,0.77</div>
                </StatusCell>
                <StatusCell $w={155} $gap={2} $pad={2}>
                    <div>0.4434&lt;148.0303</div>
                    <div>@1.0037&lt;50.1029</div>
                </StatusCell>
                <HintCell $w={259} $gap={3} $pad={3}>
                    <HintText>
                        <div>Select entity or region</div>
                        <div>Move entity or reference</div>
                    </HintText>
                    <MouseIcon>
                        <svg width="28" height="32" viewBox="0 0 28 32">
                            <defs>
                                <radialGradient id="mouseBody" cx="0.45" cy="0.35" r="0.75">
                                    <stop offset="0.55" stopColor="#fbfbfc" />
                                    <stop offset="1" stopColor="#b4b8c0" />
                                </radialGradient>
                            </defs>
                            <ellipse cx="14" cy="17" rx="10.5" ry="14" transform="rotate(-18 14 17)" fill="url(#mouseBody)" stroke="#a4a8b0" />
                            <path d="M5 11 C9 16 17 14 20 8" stroke="#c8ccd2" fill="none" />
                            <ellipse cx="12" cy="9" rx="1.6" ry="2.6" fill="#5570c8" />
                        </svg>
                    </MouseIcon>
                </HintCell>
                <StatusCell $w={196} $pad={1}>
                    <div>Selected entities:</div>
                    <div>1 Arc on Layer '0'.</div>
                </StatusCell>
                <SizeGrip>
                    <svg width="14" height="14" stroke="#777">
                        <path d="M1 13 L13 1 M5 13 L13 5 M9 13 L13 9" />
                    </svg>
                </SizeGrip>
            </StatusBar>
        </Window>
    );
}
